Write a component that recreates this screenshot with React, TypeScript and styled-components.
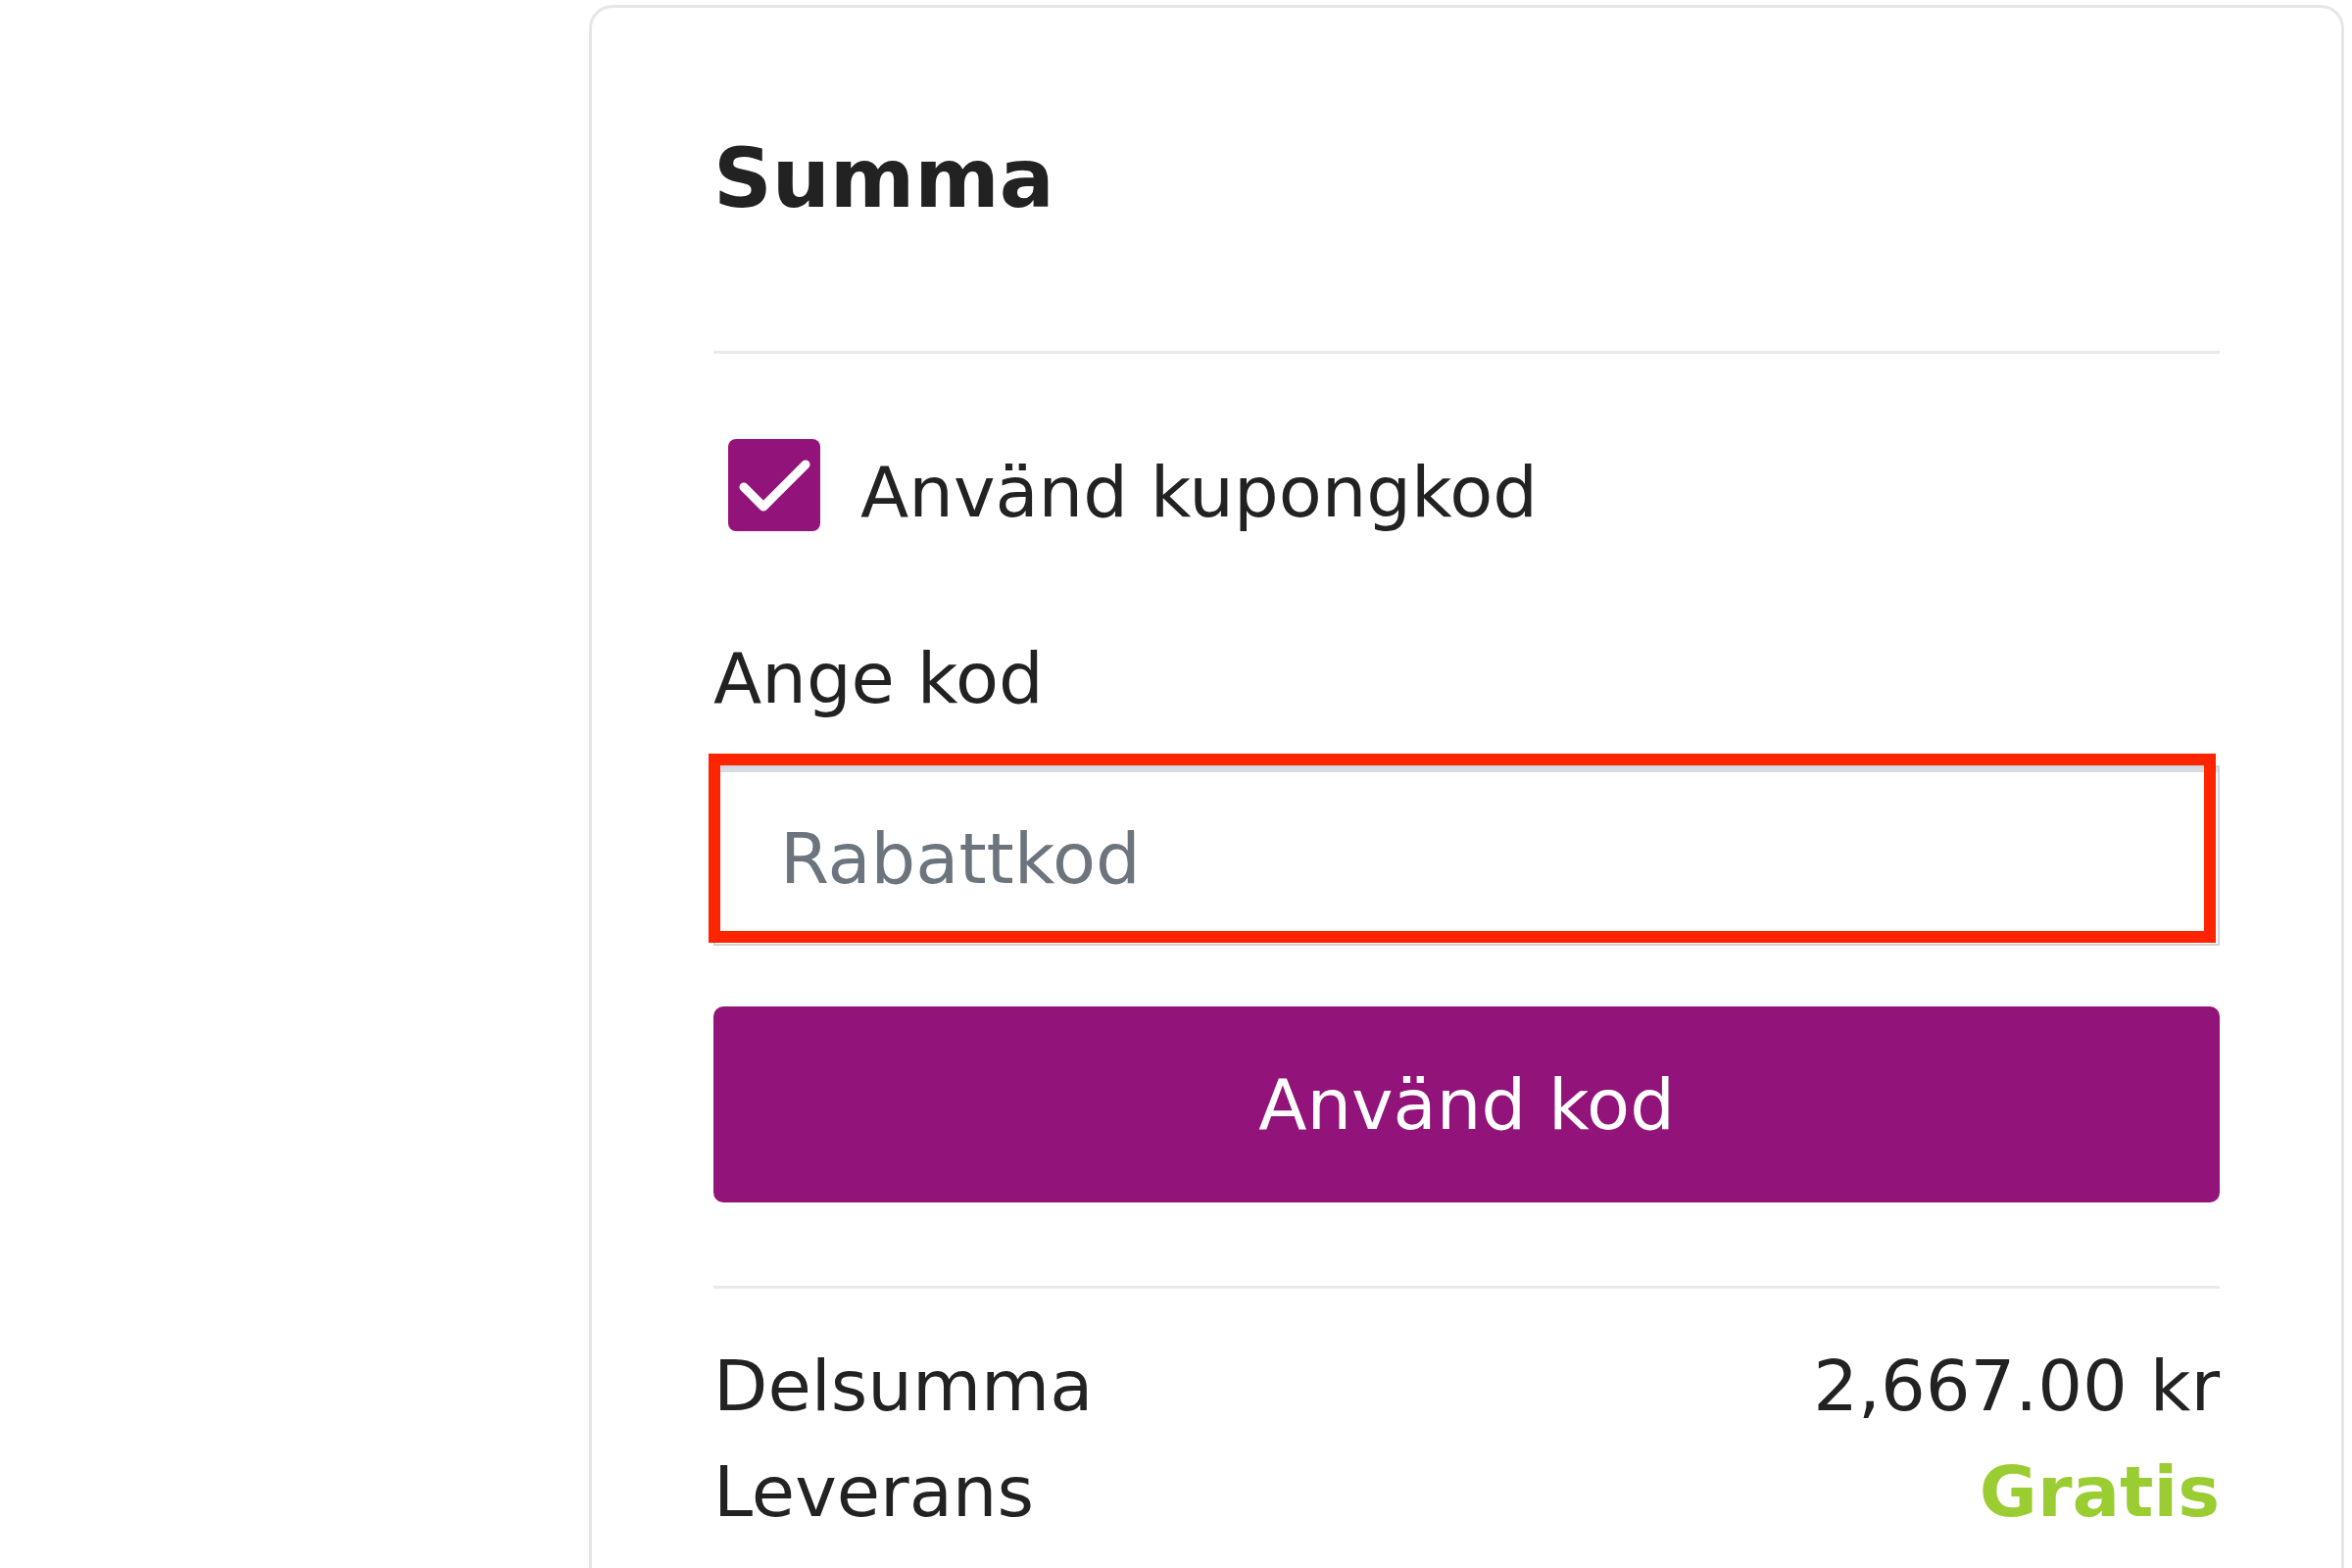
import React from "react";
import styled, { createGlobalStyle } from "styled-components";

const PURPLE = "#921379";
const TEXT = "#222222";

const GlobalStyle = createGlobalStyle`
  html, body {
    margin: 0;
    padding: 0;
    background: #ffffff;
    width: 2400px;
    height: 1600px;
    overflow: hidden;
  }
  body {
    font-family: "DejaVu Sans", Verdana, "Noto Sans", sans-serif;
    color: ${TEXT};
  }
  * { box-sizing: border-box; }
`;

const Page = styled.div`
  display: flex;
  align-items: flex-start;
  padding: 5px 0 0 601px;
  width: 2400px;
  height: 1600px;
`;

const Card = styled.section`
  width: 1791px;
  border: 3px solid #e6e6e6;
  border-radius: 24px;
  padding: 124px;
  background: #ffffff;
  display: flex;
  flex-direction: column;
`;

const Title = styled.h2`
  margin: 0;
  font-size: 83px;
  font-weight: 700;
  line-height: 101px;
  color: ${TEXT};
`;

const Divider = styled.div<{ $top: number }>`
  height: 3px;
  background: #e9e9e9;
  margin-top: ${(p) => p.$top}px;
  flex-shrink: 0;
`;

const CheckRow = styled.label`
  display: flex;
  align-items: flex-start;
  gap: 41px;
  margin-top: 87px;
  font-size: 72px;
  line-height: 108px;
  color: ${TEXT};
  cursor: pointer;
`;

const CheckBox = styled.span`
  width: 94px;
  height: 94px;
  margin-left: 15px;
  border-radius: 8px;
  background: ${PURPLE};
  display: flex;
  align-items: center;
  justify-content: center;
  flex-shrink: 0;
`;

const FieldLabel = styled.div`
  margin-top: 82px;
  font-size: 72px;
  line-height: 108px;
  color: ${TEXT};
`;

const InputWrap = styled.div`
  position: relative;
  margin-top: 35px;
`;

const CodeInput = styled.input`
  display: block;
  width: 100%;
  height: 184px;
  border: 2px solid #ced4da;
  box-shadow: inset 0 5px 0 #d7dce1;
  border-radius: 0;
  padding: 5px 61px 0 66px;
  font-family: "DejaVu Sans", Verdana, sans-serif;
  font-size: 72px;
  color: ${TEXT};
  background: #ffffff;
  outline: none;
  &::placeholder {
    color: #6c757d;
    opacity: 1;
  }
`;

const Highlight = styled.span`
  position: absolute;
  left: -5px;
  top: -12px;
  width: 1538px;
  height: 193px;
  border: 12px solid #ff2400;
  pointer-events: none;
`;

const ApplyButton = styled.button`
  margin-top: 62px;
  height: 200px;
  width: 100%;
  border: none;
  border-radius: 10px;
  background: ${PURPLE};
  color: #ffffff;
  font-family: "DejaVu Sans", Verdana, sans-serif;
  font-size: 72px;
  line-height: 108px;
  cursor: pointer;
`;

const SummaryList = styled.div`
  margin-top: 45px;
  display: flex;
  flex-direction: column;
`;

const SummaryRow = styled.div`
  display: flex;
  justify-content: space-between;
  font-size: 72px;
  line-height: 108px;
  color: ${TEXT};
`;

const Value = styled.span<{ $color?: string; $bold?: boolean }>`
  color: ${(p) => p.$color || TEXT};
  font-weight: ${(p) => (p.$bold ? 700 : 400)};
`;

export default function App() {
  return (
    <>
      <GlobalStyle />
      <Page>
        <Card>
          <Title>Summa</Title>
          <Divider $top={125} />
          <CheckRow>
            <CheckBox>
              <svg width="94" height="94" viewBox="0 0 94 94">
                <polyline
                  points="16,49 36,69 79,26"
                  fill="none"
                  stroke="#ffffff"
                  strokeWidth="9"
                  strokeLinecap="round"
                  strokeLinejoin="round"
                />
              </svg>
            </CheckBox>
            <span>Använd kupongkod</span>
          </CheckRow>
          <FieldLabel>Ange kod</FieldLabel>
          <InputWrap>
            <CodeInput placeholder="Rabattkod" />
            <Highlight />
          </InputWrap>
          <ApplyButton>Använd kod</ApplyButton>
          <Divider $top={85} />
          <SummaryList>
            <SummaryRow>
              <span>Delsumma</span>
              <Value>2,667.00 kr</Value>
            </SummaryRow>
            <SummaryRow>
              <span>Leverans</span>
              <Value $color="#9acd32" $bold>
                Gratis
              </Value>
            </SummaryRow>
          </SummaryList>
        </Card>
      </Page>
    </>
  );
}
